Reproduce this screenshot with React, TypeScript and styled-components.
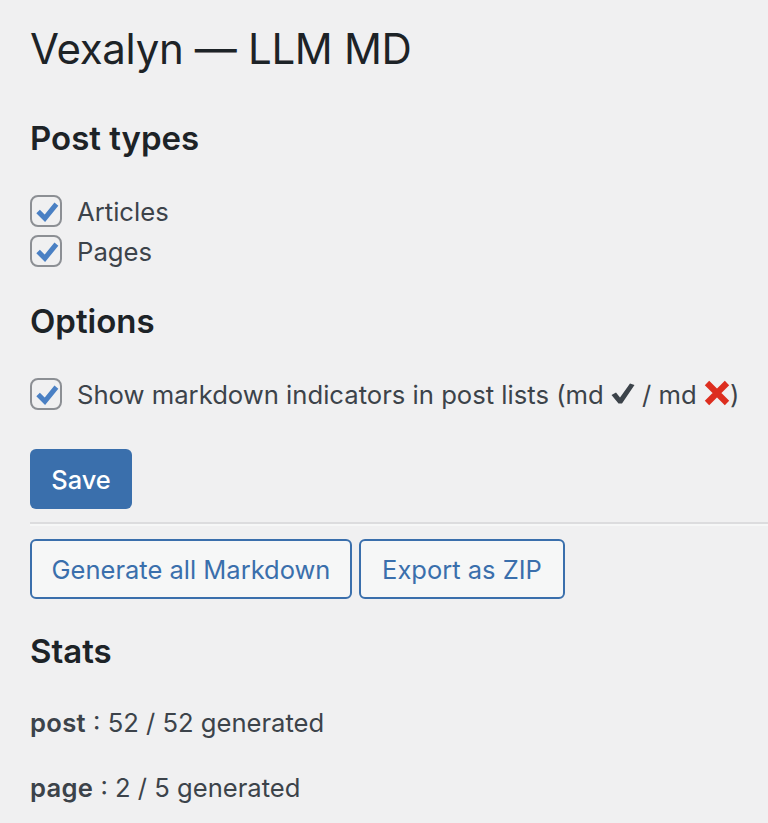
import React from "react";
import styled, { createGlobalStyle } from "styled-components";

const GlobalStyle = createGlobalStyle`
    html, body {
        margin: 0;
        background: #f0f0f1;
    }
    body {
        font-family: Inter, "Liberation Sans", sans-serif;
        color: #3c434a;
        font-size: 26px;
    }
`;

const Wrap = styled.div`
    width: 768px;
    height: 823px;
    overflow: hidden;
    box-sizing: border-box;
    padding: 20px 0 0 30px;
`;

const Title = styled.h1`
    margin: 0 0 41px;
    font-size: 42px;
    font-weight: 400;
    line-height: 58px;
    color: #1d2327;
    letter-spacing: -0.33px;
`;

const Heading = styled.h2<{ $after: number }>`
    margin: 0 0 ${(p) => p.$after}px;
    font-size: 33px;
    font-weight: 600;
    line-height: 38px;
    color: #1d2327;
`;

const CheckList = styled.div<{ $after: number }>`
    display: flex;
    flex-direction: column;
    gap: 8px;
    margin-bottom: ${(p) => p.$after}px;
`;

const CheckRow = styled.label`
    display: flex;
    align-items: center;
    gap: 15px;
    height: 32px;
    line-height: 32px;
    font-size: 25.65px;
    white-space: nowrap;
`;

const Box = styled.span`
    width: 32px;
    height: 32px;
    box-sizing: border-box;
    flex: none;
    margin-bottom: 2px;
    padding-left: 2px;
    border: 2px solid #8c8f94;
    border-radius: 8px;
    display: flex;
    align-items: center;
    justify-content: center;
`;

const Glyph = styled.svg<{ $drop: number }>`
    display: inline-block;
    vertical-align: ${(p) => p.$drop}px;
`;

const PrimaryButton = styled.button`
    display: block;
    width: 102px;
    height: 60px;
    padding: 0;
    border: none;
    border-radius: 6px;
    background: #3a6fac;
    color: #fff;
    font: 500 25.4px Inter, "Liberation Sans", sans-serif;
`;

const Rule = styled.hr`
    margin: 13px 0 13px;
    border: none;
    border-top: 2px solid #dcdcde;
    border-bottom: 2px solid #f6f7f7;
`;

const ButtonRow = styled.div`
    display: flex;
    gap: 7px;
    margin-bottom: 33px;
`;

const SecondaryButton = styled.button<{ $width: number }>`
    width: ${(p) => p.$width}px;
    height: 60px;
    padding: 0;
    border: 2px solid #3a6fac;
    border-radius: 6px;
    background: #f6f7f7;
    color: #3a6fac;
    font: 400 25.5px Inter, "Liberation Sans", sans-serif;
`;

const StatLine = styled.p`
    margin: 0 0 29px;
    font-size: 25.6px;
    line-height: 36px;

    strong {
        font-weight: 600;
        letter-spacing: 0.3px;
    }
`;

const CheckBox = () => (
    <Box>
        <svg width="23" height="21" viewBox="0 0 22 20">
            <path d="M2 10 L8.5 16.5 L19.5 3" fill="none" stroke="#4a80c4" strokeWidth="4.8" />
        </svg>
    </Box>
);

const HeavyCheck = () => (
    <Glyph $drop={0} width="24" height="21" viewBox="0 0 24 21">
        <path d="M0.5 12 L5 9.5 L9 14.5 L19 0.5 L23.5 2 L11 20.5 L7.5 20.5 Z" fill="#3c434a" />
    </Glyph>
);

const RedCross = () => (
    <Glyph $drop={-2} width="26" height="26" viewBox="0 0 26 26">
        <path d="M3 3 L23 23 M23 3 L3 23" fill="none" stroke="#dd2e1f" strokeWidth="6.2" />
    </Glyph>
);

export default function App() {
    return (
        <Wrap>
            <GlobalStyle />
            <Title>Vexalyn — LLM MD</Title>
            <Heading $after={39}>Post types</Heading>
            <CheckList $after={34}>
                <CheckRow><CheckBox />Articles</CheckRow>
                <CheckRow><CheckBox />Pages</CheckRow>
            </CheckList>
            <Heading $after={39}>Options</Heading>
            <CheckList $after={38}>
                <CheckRow>
                    <CheckBox />
                    <span>Show markdown indicators in post lists (md <HeavyCheck /> / md <RedCross />)</span>
                </CheckRow>
            </CheckList>
            <PrimaryButton>Save</PrimaryButton>
            <Rule />
            <ButtonRow>
                <SecondaryButton $width={322}>Generate all Markdown</SecondaryButton>
                <SecondaryButton $width={206}>Export as ZIP</SecondaryButton>
            </ButtonRow>
            <Heading $after={35}>Stats</Heading>
            <StatLine><strong>post</strong> : 52 / 52 generated</StatLine>
            <StatLine><strong>page</strong> : 2 / 5 generated</StatLine>
        </Wrap>
    );
}
